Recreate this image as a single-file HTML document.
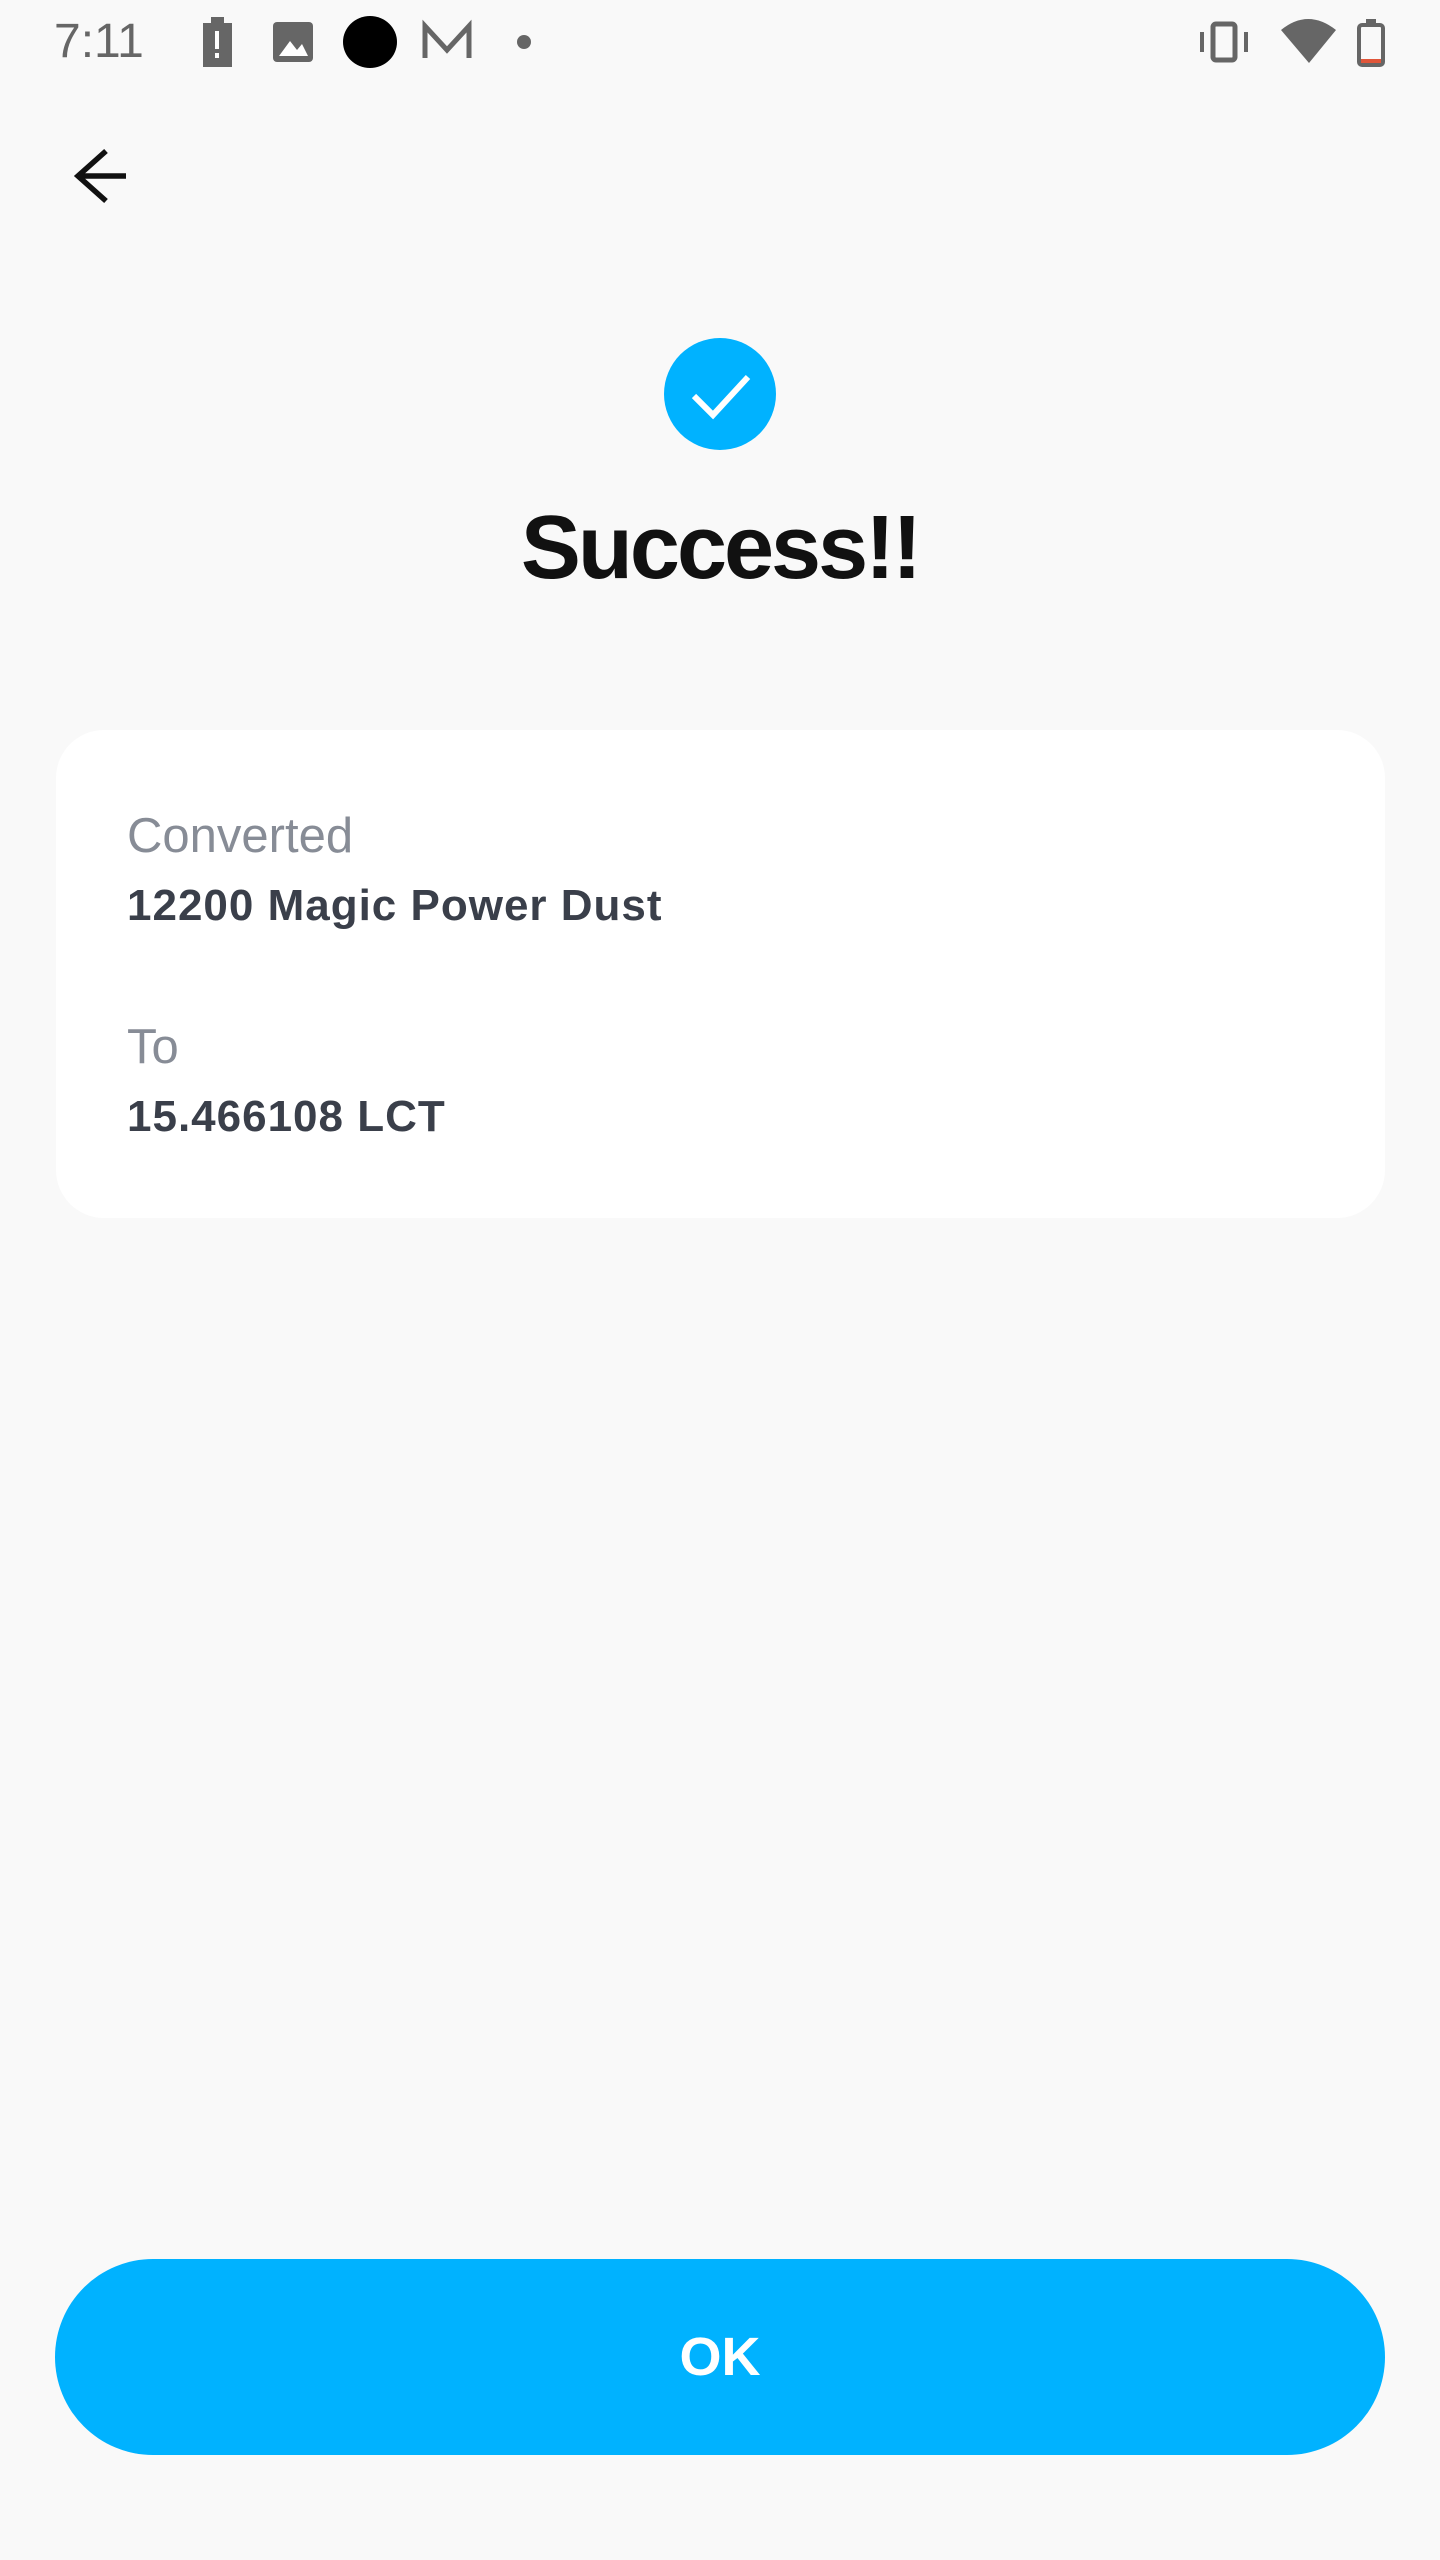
<!DOCTYPE html>
<html><head><meta charset="utf-8"><style>
html,body{margin:0;padding:0;}
body{width:1440px;height:2560px;background:#f9f9f9;position:relative;overflow:hidden;font-family:"Liberation Sans",sans-serif;}
.a{position:absolute;}
.card{left:56px;top:730px;width:1329px;height:488px;background:#fff;border-radius:48px;}
.lbl{color:#878c96;font-size:49px;left:127px;line-height:1;}
.val{color:#3a3f4a;font-size:44px;font-weight:bold;left:127px;line-height:1;letter-spacing:1px;}
.btn{left:55px;top:2259px;width:1330px;height:196px;background:#00b2ff;border-radius:98px;color:#fff;font-weight:bold;font-size:54px;text-align:center;line-height:196px;}
</style></head><body>
<div class="a" style="left:54px;top:18px;font-size:48px;color:#666;line-height:1;">7:11</div>
<svg class="a" style="left:0;top:0" width="1440" height="80">
 <rect x="203" y="23" width="29" height="44" fill="#666"/><rect x="211" y="17" width="13" height="7" fill="#666"/>
 <rect x="215" y="31" width="4" height="18" fill="#fff"/><rect x="215" y="53" width="4" height="5" fill="#fff"/>
 <rect x="273" y="22" width="40" height="40" rx="4" fill="#666"/><path d="M279 56 L290 41 L297 50 L302 44 L308 56 Z" fill="#fff"/>
 <ellipse cx="370" cy="42" rx="27" ry="26" fill="#000"/>
 <path d="M425 58 V26 L447 50 L469 26 V58" fill="none" stroke="#666" stroke-width="5"/>
 <circle cx="524" cy="42" r="7" fill="#666"/>
 <rect x="1213" y="24" width="22" height="36" rx="3" fill="none" stroke="#666" stroke-width="5"/>
 <rect x="1200" y="32" width="4" height="20" fill="#666"/><rect x="1244" y="32" width="4" height="20" fill="#666"/>
 <path d="M1281 30 Q1308 8 1336 30 L1309 63 Z" fill="#666"/>
 <rect x="1359" y="25" width="24" height="40" rx="3" fill="none" stroke="#666" stroke-width="4"/><rect x="1366" y="19" width="10" height="6" fill="#666"/>
 <rect x="1361" y="59" width="20" height="4" fill="#e0563a"/>
</svg>
<svg class="a" style="left:60px;top:140px" width="80" height="70"><path d="M66 36 H22 M46 11 L18 36 L46 61" fill="none" stroke="#111" stroke-width="5.5"/></svg>
<svg class="a" style="left:662px;top:336px" width="116" height="116"><circle cx="58" cy="58" r="56" fill="#00b2ff"/><path d="M32 60 L51 79 L86 41" fill="none" stroke="#fff" stroke-width="6"/></svg>
<div class="a" style="left:0;width:1440px;top:503px;text-align:center;font-size:90px;font-weight:bold;color:#111;letter-spacing:-3px;line-height:1;">Success!!</div>
<div class="a card"></div>
<div class="a lbl" style="top:812px;">Converted</div>
<div class="a val" style="top:884px;">12200 Magic Power Dust</div>
<div class="a lbl" style="top:1023px;">To</div>
<div class="a val" style="top:1095px;">15.466108 LCT</div>
<div class="a btn">OK</div>
</body></html>
